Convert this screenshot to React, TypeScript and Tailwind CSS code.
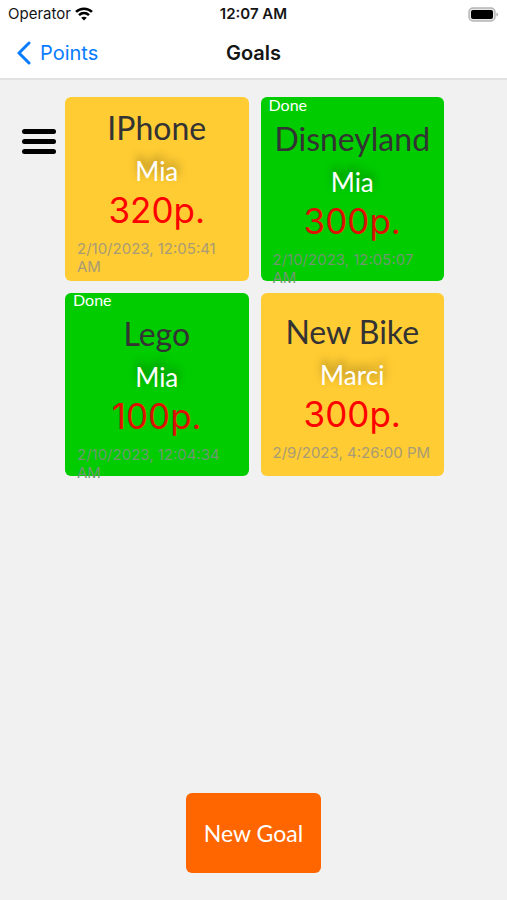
type Goal = {
  title: string;
  owner: string;
  points: number;
  date: string;
  done: boolean;
};

const goals: Goal[] = [
  { title: "IPhone", owner: "Mia", points: 320, date: "2/10/2023, 12:05:41 AM", done: false },
  { title: "Disneyland", owner: "Mia", points: 300, date: "2/10/2023, 12:05:07 AM", done: true },
  { title: "Lego", owner: "Mia", points: 100, date: "2/10/2023, 12:04:34 AM", done: true },
  { title: "New Bike", owner: "Marci", points: 300, date: "2/9/2023, 4:26:00 PM", done: false },
];

function WifiIcon() {
  return (
    <svg width="18" height="14" viewBox="0 0 18 14" fill="none" stroke="#000" strokeWidth="2.6" aria-hidden="true">
      <path d="M1 4.9C5.4.7 12.6.7 17 4.9" />
      <path d="M4 8.1c2.9-2.6 7.1-2.6 10 0" />
      <path d="M9 13.6 6.2 10.8c1.6-1.4 4-1.4 5.6 0z" fill="#000" stroke="none" />
    </svg>
  );
}

function BatteryIcon() {
  return (
    <svg width="31" height="15" viewBox="0 0 31 15" aria-hidden="true">
      <rect x="1" y="1" width="26" height="13" rx="4" fill="#e6e6e6" stroke="#b5b5b5" strokeWidth="1.4" />
      <rect x="3" y="3" width="22" height="9" rx="2" fill="#000" />
      <path d="M28.5 5.5c2 .8 2 3.200 0 4z" fill="#a8a8a8" />
    </svg>
  );
}

function GoalCard({ goal }: { goal: Goal }) {
  return (
    <article
      className={`flex aspect-square min-h-0 min-w-0 flex-col justify-center rounded-md px-3 ${
        goal.done ? "bg-[#00cc00]" : "bg-[#ffcc33]"
      }`}
    >
      {goal.done && (
        <p className="-mx-1 h-[22px] shrink-0 font-[Lato,sans-serif] text-base leading-7 text-white">Done</p>
      )}
      <h2 className="shrink-0 text-center font-[Lato,sans-serif] text-[32px] leading-[52px] whitespace-nowrap text-[#333333]">
        {goal.title}
      </h2>
      <p className="shrink-0 text-center font-[Lato,sans-serif] text-[26px] leading-[34px] text-white [text-shadow:1px_-5px_10px_rgba(0,0,0,0.4)]">
        {goal.owner}
      </p>
      <p className={`shrink-0 text-center text-[35px] leading-[44px] ${goal.done ? "text-[#dd1100]" : "text-[#ff0000]"}`}>
        {goal.points}p.
      </p>
      <time className={`block shrink-0 pt-2 text-[15px] leading-[18px] ${goal.done ? "text-[#6f986f]" : "text-[#a99b75]"}`}>
        {goal.date}
      </time>
    </article>
  );
}

export default function App() {
  return (
    <div className="flex min-h-screen flex-col bg-[#f1f1f1] font-[Inter,sans-serif] text-[#151515]">
      <header className="border-b-2 border-[#e2e2e2] bg-white">
        <div className="grid h-7 grid-cols-3 items-center px-2 text-[15px]">
          <div className="flex items-center gap-1">
            <span>Operator</span>
            <WifiIcon />
          </div>
          <span className="text-center font-semibold">12:07 AM</span>
          <div className="flex justify-end">
            <BatteryIcon />
          </div>
        </div>
        <nav className="grid h-[50px] grid-cols-3 items-center px-4 text-xl">
          <a href="#points" className="flex items-center gap-2 text-[#087cff]">
            <svg width="16" height="24" viewBox="0 0 16 24" fill="none" stroke="currentColor" strokeWidth="3" strokeLinecap="round" strokeLinejoin="round" aria-hidden="true">
              <path d="M13 2 3 12l10 10" />
            </svg>
            Points
          </a>
          <h1 className="text-center font-semibold">Goals</h1>
        </nav>
      </header>

      <main className="flex grow flex-col">
        <div className="flex items-start pt-[17px] pr-[63px] pl-[21px]">
          <button type="button" aria-label="Menu" className="mt-8 mr-2 flex w-9 shrink-0 flex-col gap-[5px] px-px">
            <span className="h-[5px] w-full rounded-full bg-black" />
            <span className="h-[5px] w-full rounded-full bg-black" />
            <span className="h-[5px] w-full rounded-full bg-black" />
          </button>
          <section className="grid grow grid-cols-2 gap-3">
            {goals.map((goal) => (
              <GoalCard key={goal.title} goal={goal} />
            ))}
          </section>
        </div>
        <div className="mt-auto flex justify-center pb-[27px]">
          <button type="button" className="h-20 rounded-md bg-[#ff6600] px-[18px] font-[Lato,sans-serif] text-[23px] text-white">
            New Goal
          </button>
        </div>
      </main>
    </div>
  );
}
